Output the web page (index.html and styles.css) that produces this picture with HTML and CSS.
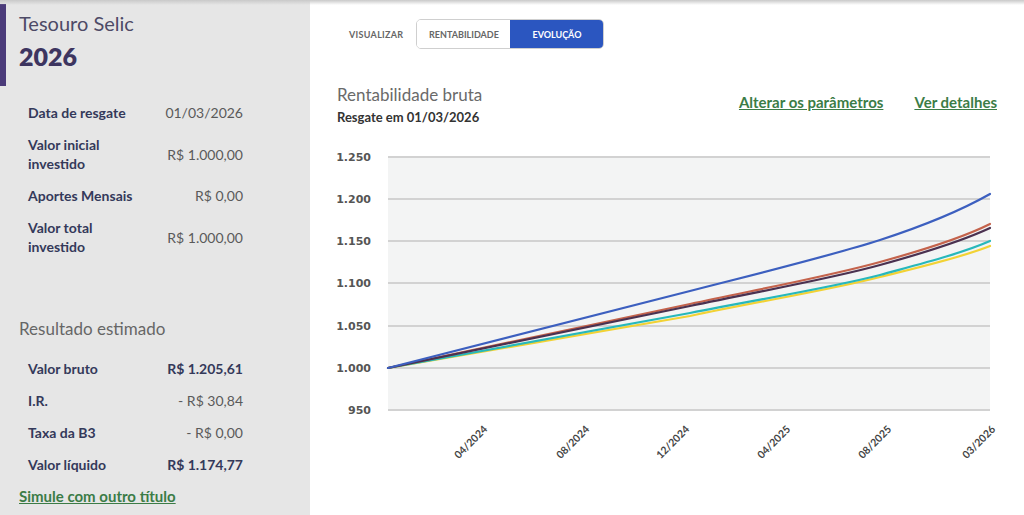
FILE: index.html
```html
<!DOCTYPE html>
<html lang="pt-BR">
<head>
    <meta charset="UTF-8">
    <meta name="viewport" content="width=device-width, initial-scale=1.0">
    <title>Tesouro Selic 2026</title>
    <link rel="stylesheet" href="styles.css">
</head>
<body>

<div class="page">
    <aside class="side">
        <div class="side-head">
            <h2 class="bond-name">Tesouro Selic</h2>
            <h1 class="bond-year">2026</h1>
        </div>

        <dl class="facts">
            <dt>Data de resgate</dt>
            <dd>01/03/2026</dd>
            <dt>Valor inicial<br>investido</dt>
            <dd>R$ 1.000,00</dd>
            <dt>Aportes Mensais</dt>
            <dd>R$ 0,00</dd>
            <dt>Valor total<br>investido</dt>
            <dd>R$ 1.000,00</dd>
        </dl>

        <h3 class="result-title">Resultado estimado</h3>

        <dl class="facts results">
            <dt>Valor bruto</dt>
            <dd class="strong">R$ 1.205,61</dd>
            <dt>I.R.</dt>
            <dd>- R$ 30,84</dd>
            <dt>Taxa da B3</dt>
            <dd>- R$ 0,00</dd>
            <dt>Valor líquido</dt>
            <dd class="strong">R$ 1.174,77</dd>
        </dl>

        <a href="#" class="link other">Simule com outro título</a>
    </aside>

    <main class="main">
        <div class="view-bar">
            <span class="view-label">VISUALIZAR</span>
            <div class="toggle">
                <button class="toggle-btn">RENTABILIDADE</button>
                <button class="toggle-btn active">EVOLUÇÃO</button>
            </div>
        </div>

        <div class="chart-head">
            <div>
                <h2 class="chart-title">Rentabilidade bruta</h2>
                <p class="chart-sub">Resgate em 01/03/2026</p>
            </div>
            <div class="chart-links">
                <a href="#" class="link">Alterar os parâmetros</a>
                <a href="#" class="link">Ver detalhes</a>
            </div>
        </div>

        <svg class="chart" width="714" height="340" viewBox="0 0 714 340">
            <rect x="78" y="17" width="602" height="253" fill="#f3f4f4"/>
            <g stroke="#d2d2d2" stroke-width="2">
                <line x1="78" x2="680" y1="17" y2="17"/>
                <line x1="78" x2="680" y1="59" y2="59"/>
                <line x1="78" x2="680" y1="101" y2="101"/>
                <line x1="78" x2="680" y1="143" y2="143"/>
                <line x1="78" x2="680" y1="186" y2="186"/>
                <line x1="78" x2="680" y1="228" y2="228"/>
                <line x1="78" x2="680" y1="270" y2="270"/>
            </g>
            <g class="y-labels" text-anchor="end">
                <text x="61" y="21">1.250</text>
                <text x="61" y="63">1.200</text>
                <text x="61" y="105">1.150</text>
                <text x="61" y="147">1.100</text>
                <text x="61" y="190">1.050</text>
                <text x="61" y="232">1.000</text>
                <text x="61" y="274">950</text>
            </g>
            <g class="x-labels" text-anchor="end">
                <text transform="translate(178 290) rotate(-45)">04/2024</text>
                <text transform="translate(280 290) rotate(-45)">08/2024</text>
                <text transform="translate(380 290) rotate(-45)">12/2024</text>
                <text transform="translate(481 290) rotate(-45)">04/2025</text>
                <text transform="translate(582 290) rotate(-45)">08/2025</text>
                <text transform="translate(686 290) rotate(-45)">03/2026</text>
            </g>
            <g fill="none" stroke-width="2.2" stroke-linejoin="round" stroke-linecap="round">
                <path stroke="#f2d234" d="M78,228 L380,176 C450,161 520,150 570,137 C610,127 650,118 680,106"/>
                <path stroke="#27b8bb" d="M78,228 L380,173 C450,159 520,148 570,135 C610,124 650,114 680,101"/>
                <path stroke="#c4634c" d="M78,228 L380,164 C450,149 520,136 570,122 C610,111 650,99 680,84"/>
                <path stroke="#4a3150" d="M78,228 L380,166 C450,151 520,139 570,125 C610,114 650,102 680,88"/>
                <path stroke="#3c5fbf" d="M78,228 L380,151 C450,133 520,116 570,100 C610,87 650,71 680,54"/>
            </g>
        </svg>
    </main>
</div>

</body>
</html>
```

FILE: styles.css
```css
*{
    margin: 0;
    padding: 0;
    box-sizing: border-box;
}
body{
    font-family: Lato, "Open Sans", sans-serif;
    background-color: #fff;
    color: #333;
    overflow: hidden;
}
.page{
    display: flex;
    height: 515px;
    position: relative;
}
/* soft shadow of the bar above */
.page::before{
    content: "";
    position: absolute;
    left: 0;
    right: 0;
    top: 0;
    height: 5px;
    background: linear-gradient(#c9c9c9, rgba(230,230,230,0));
}
.side{
    width: 310px;
    background-color: #e6e6e6;
    display: flex;
    flex-direction: column;
}
.side-head{
    margin-top: 4px;
    height: 82px;
    border-left: 6px solid #4b3b7a;
    padding: 7px 0 0 13px;
}
.bond-name{
    font-size: 20px;
    font-weight: 400;
    color: #4d4a66;
    line-height: 24px;
}
.bond-year{
    font-size: 25px;
    font-weight: 800;
    color: #3d3560;
    line-height: 30px;
    margin-top: 6px;
}
.facts{
    display: grid;
    grid-template-columns: 1fr auto;
    align-items: center;
    row-gap: 13px;
    padding: 17px 67px 0 28px;
    font-size: 14px;
    line-height: 19px;
}
.facts dt{
    color: #34395a;
    font-weight: 700;
}
.facts dd{
    text-align: right;
    color: #5a5a5a;
}
.facts dd.strong{
    color: #34395a;
    font-weight: 700;
}
.result-title{
    font-size: 17px;
    font-weight: 400;
    color: #666;
    padding-left: 19px;
    margin-top: 62px;
}
.results{
    padding-top: 20px;
    row-gap: 13px;
}
.link{
    color: #3b7c46;
    font-weight: 700;
    font-size: 15px;
    text-decoration: underline;
}
.other{
    margin: 13px 0 0 19px;
}
.main{
    flex: 1;
}
.view-bar{
    display: flex;
    align-items: center;
    height: 80px;
    padding: 0 0 12px 39px;
}
.view-label{
    font-size: 9px;
    font-weight: 700;
    color: #666;
    letter-spacing: 0.3px;
    margin-right: 13px;
}
.toggle{
    display: flex;
    border: 1px solid #cfcfcf;
    border-radius: 5px;
    overflow: hidden;
    height: 30px;
}
.toggle-btn{
    border: none;
    background: #fff;
    font-family: inherit;
    font-size: 9px;
    font-weight: 700;
    color: #666;
    width: 93px;
}
.toggle-btn.active{
    background-color: #2b56c0;
    color: #fff;
}
.chart-head{
    display: flex;
    justify-content: space-between;
    padding: 4px 27px 0 27px;
    height: 60px;
}
.chart-title{
    font-size: 17px;
    font-weight: 400;
    color: #6a6a6a;
    line-height: 22px;
}
.chart-sub{
    font-size: 13px;
    font-weight: 700;
    color: #333;
    margin-top: 3px;
}
.chart-links{
    display: flex;
    gap: 31px;
    padding-top: 9px;
}
.chart{
    display: block;
}
.y-labels text{
    font-size: 11px;
    font-weight: 700;
    fill: #555;
    font-family: "DejaVu Sans", sans-serif;
}
.x-labels text{
    font-size: 10.5px;
    font-weight: 700;
    fill: #444;
}
```
